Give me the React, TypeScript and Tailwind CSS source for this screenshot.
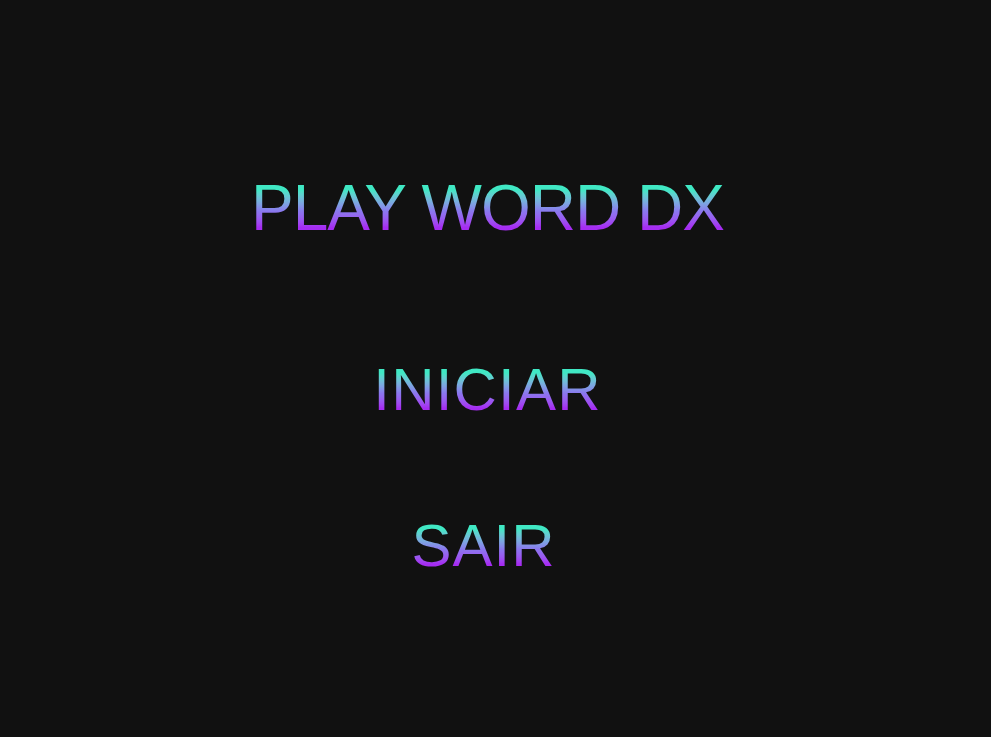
import React from 'react';

const gradText =
  "bg-gradient-to-b from-[#40e8c4] from-[22%] via-[#8a78ee] via-[55%] to-[#a52cf2] to-[80%] bg-clip-text text-transparent";

export default function App() {
  return (
    <div
      className="w-full h-[737px] bg-[#111111] flex flex-col items-center pr-4"
      style={{ fontFamily: '"Liberation Sans", Arial, sans-serif' }}
    >
      <h1 className={`mt-[176px] text-[64px] leading-none tracking-[-1px] font-normal ${gradText}`}>
        PLAY WORD DX
      </h1>
      <nav className="mt-[120px] flex flex-col items-center gap-[96px]">
        <button className={`text-[60px] leading-none tracking-[1.2px] font-normal ${gradText}`}>
          INICIAR
        </button>
        <button className={`mr-2 text-[60px] leading-none tracking-[1px] font-normal ${gradText}`}>
          SAIR
        </button>
      </nav>
    </div>
  );
}
